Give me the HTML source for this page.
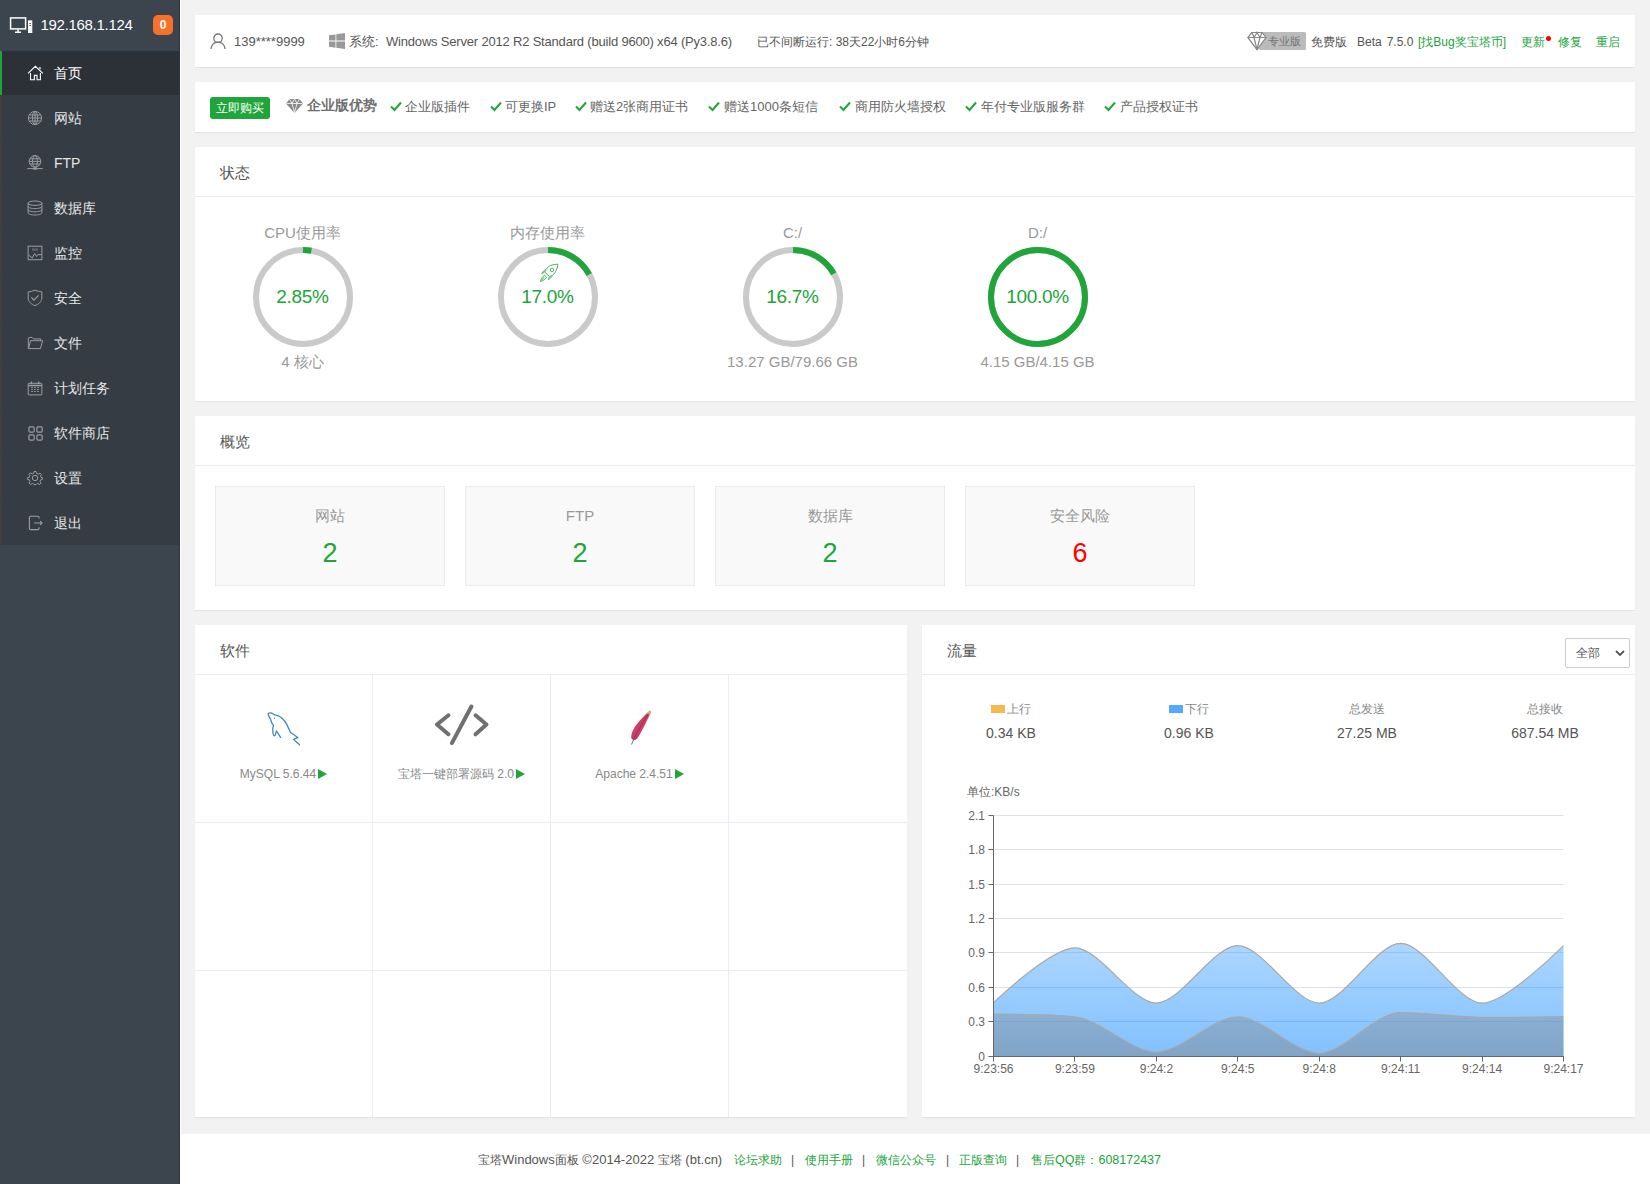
<!DOCTYPE html>
<html><head><meta charset="utf-8">
<style>
*{margin:0;padding:0;box-sizing:border-box}
html,body{width:1650px;height:1184px;overflow:hidden}
body{background:#f2f2f2;font-family:"Liberation Sans",sans-serif;color:#666;position:relative}
.a{position:absolute;white-space:nowrap}
#side{position:absolute;left:0;top:0;width:180px;height:1184px;background:#3c444d}
#side .ln{position:absolute;left:179px;top:0;width:1px;height:1184px;background:#30363e}
#side .wl{position:absolute;left:180px;top:0;width:1px;height:1184px;background:#fff}
#menu{position:absolute;left:0;top:51px;width:179px;height:494px;background:#353c44}
.mi{position:absolute;left:0;width:179px;height:44px;border-left:2px solid #3f3f3f}
.mi.cur{background:#2c3138;border-left-color:#20a53a}
.mi span{position:absolute;left:52px;top:0;line-height:44px;font-size:14px;color:#e6e6e6}
.mi.cur span{color:#fff}
.mi svg{position:absolute}
.pn{position:absolute;background:#fff;box-shadow:0 1px 1px rgba(0,0,0,.06)}
.ph{position:absolute;left:0;top:0;right:0;height:50px;border-bottom:1px solid #ececec}
.ph span{position:absolute;left:25px;top:1px;line-height:50px;font-size:15px;color:#555}
.g{color:#20a53a}
</style></head><body>
<div id="side">
  <div class="ln"></div><div class="wl"></div>
  <svg class="a" style="left:9px;top:16px" width="25" height="18" viewBox="0 0 25 18" fill="none" stroke="#fff" stroke-width="1.5"><rect x="1.6" y="1.9" width="15" height="11"/><path d="M6 16.3h6M9 13.5v2.5"/><rect x="19.5" y="4.9" width="3.3" height="11.6" fill="#fff" stroke-width="1"/><path d="M20.3 7.5h1.7M20.3 9.5h1.7" stroke="#3c444d" stroke-width=".8"/></svg>
  <div class="a" id="ip" style="left:40.5px;top:15px;font-size:15px;line-height:20px;color:#fff;letter-spacing:-0.3px">192.168.1.124</div>
  <div class="a" style="left:153px;top:15px;width:20px;height:20px;border-radius:5px;background:#f7712a;color:#fff;font-size:12px;font-weight:bold;line-height:20px;text-align:center">0</div>
  <div id="menu">
    <div class="mi cur" style="top:0px"><svg style="left:22px;top:11px" width="22" height="22" viewBox="0 0 22 22" fill="none" stroke="#9a9ea3" stroke-width="1"><path d="M4,11.3 L11.4,4.3 L18.8,11.3 M6.5,11 V17.7 H10.4 V13.4 H13 V17.7 H16.4 V11" stroke="#fff" stroke-width="1.1"/><circle cx="15.9" cy="6.2" r="1" fill="#fff"/></svg><span>首页</span></div>
    <div class="mi" style="top:45px"><svg style="left:22px;top:10px" width="22" height="22" viewBox="0 0 22 22" fill="none" stroke="#9a9ea3" stroke-width="1"><circle cx="11" cy="12" r="6.6"/><ellipse cx="11" cy="12" rx="2.6" ry="6.6"/><path d="M4.4,12H17.6M5.3,9H16.7M5.3,15H16.7M11,5.4V18.6"/></svg><span>网站</span></div>
    <div class="mi" style="top:90px"><svg style="left:22px;top:10px" width="22" height="22" viewBox="0 0 22 22" fill="none" stroke="#9a9ea3" stroke-width="1"><circle cx="11" cy="10.4" r="5.8"/><ellipse cx="11" cy="10.4" rx="2.4" ry="5.8"/><path d="M5.2,10.4H16.8M6,7.8H16M6,13H16M3.2,17.6H18.8"/><rect x="9.2" y="16.6" width="3.8" height="2" fill="#9a9ea3" stroke="none"/></svg><span>FTP</span></div>
    <div class="mi" style="top:135px"><svg style="left:22px;top:10px" width="22" height="22" viewBox="0 0 22 22" fill="none" stroke="#9a9ea3" stroke-width="1"><ellipse cx="11" cy="7.2" rx="6.9" ry="2.2"/><path d="M4.1,7.2V16.8C4.1,18 7.2,19 11,19S17.9,18 17.9,16.8V7.2M4.1,10.4C4.1,11.6 7.2,12.6 11,12.6S17.9,11.6 17.9,10.4M4.1,13.6C4.1,14.8 7.2,15.8 11,15.8S17.9,14.8 17.9,13.6"/></svg><span>数据库</span></div>
    <div class="mi" style="top:180px"><svg style="left:22px;top:10px" width="22" height="22" viewBox="0 0 22 22" fill="none" stroke="#9a9ea3" stroke-width="1"><rect x="4.1" y="5.2" width="13.8" height="13.5"/><path d="M4.8,14.3L8.4,17 10.5,12.5 12.5,15.5 13.8,13.6H17.5"/><rect x="8" y="7.4" width="5.8" height="2.4" fill="#5d636a" stroke="none"/></svg><span>监控</span></div>
    <div class="mi" style="top:225px"><svg style="left:22px;top:10px" width="22" height="22" viewBox="0 0 22 22" fill="none" stroke="#9a9ea3" stroke-width="1"><path d="M11,4.2C13,5 15.5,5.6 17.8,5.9V12C17.8,15.8 14.5,18.2 11,19.6 7.5,18.2 4.2,15.8 4.2,12V5.9C6.5,5.6 9,5 11,4.2Z"/><path d="M7.4,11.4L9.9,14.2 14.6,9.4" stroke-width="1.2"/></svg><span>安全</span></div>
    <div class="mi" style="top:270px"><svg style="left:22px;top:10px" width="22" height="22" viewBox="0 0 22 22" fill="none" stroke="#9a9ea3" stroke-width="1"><path d="M4.3,17.4V7.4C4.3,6.8 4.7,6.4 5.3,6.4H8.1L9.5,7.9H16.6V9.7M4.5,17.6L6.6,9.7H18.7L16.4,17.6Z"/></svg><span>文件</span></div>
    <div class="mi" style="top:315px"><svg style="left:22px;top:10px" width="22" height="22" viewBox="0 0 22 22" fill="none" stroke="#9a9ea3" stroke-width="1"><rect x="4.2" y="7.3" width="13.7" height="11.6" rx="0.8"/><path d="M4.2,9.5H17.9M7.4,5.4V8M14.6,5.4V8" stroke-width="1.3"/><path d="M7.1,11.3H8.9M10,11.3H11.8M13,11.3H14.8M7.1,13.4H8.9M10,13.4H11.8M13,13.4H14.8M7.1,15.5H8.9M10,15.5H11.8M13,15.5H14.8" stroke-width="0.9"/></svg><span>计划任务</span></div>
    <div class="mi" style="top:360px"><svg style="left:22px;top:10px" width="22" height="22" viewBox="0 0 22 22" fill="none" stroke="#9a9ea3" stroke-width="1"><rect x="4.9" y="5.9" width="5.3" height="5.3" rx="1.2" stroke-width="1.2"/><rect x="12.9" y="5.9" width="5.3" height="5.3" rx="1.2" stroke-width="1.2"/><rect x="4.9" y="13.9" width="5.3" height="5.3" rx="1.2" stroke-width="1.2"/><rect x="12.9" y="13.9" width="5.3" height="5.3" rx="1.2" stroke-width="1.2"/></svg><span>软件商店</span></div>
    <div class="mi" style="top:405px"><svg style="left:22px;top:10px" width="22" height="22" viewBox="0 0 22 22" fill="none" stroke="#9a9ea3" stroke-width="1"><circle cx="11" cy="12" r="2.7"/><path d="M10,5.5H12L12.6,7.5 14.2,8.2 16,7.1 17.4,8.5 16.4,10.3 17,11.4 18.4,11.6V13.4L16.6,13.9 16,15.3 17,17.1 15.6,18.5 13.8,17.5 12.5,18.1 12,18.6H10L9.5,17.9 8.2,17.5 6.4,18.5 5,17.1 6,15.3 5.4,13.9 3.6,13.4V11.6L5.3,11.2 5.9,9.9 5,8.3 6.4,6.9 8.2,7.9 9.5,7.4Z"/></svg><span>设置</span></div>
    <div class="mi" style="top:450px"><svg style="left:22px;top:10px" width="22" height="22" viewBox="0 0 22 22" fill="none" stroke="#9a9ea3" stroke-width="1"><path d="M15,7.4V6.3C15,5.7 14.6,5.3 14,5.3H6.4C5.8,5.3 5.4,5.7 5.4,6.3V17.6C5.4,18.2 5.8,18.6 6.4,18.6H14C14.6,18.6 15,18.2 15,17.6V16.2M10.2,12H17.8M16.2,10.2L18,12 16.2,13.8" stroke-width="1.1"/></svg><span>退出</span></div>
  </div>
</div>

<!-- top info panel -->
<div class="pn" style="left:195px;top:15px;width:1440px;height:52px"></div>
<svg class="a" style="left:210px;top:33px" width="16" height="16" viewBox="0 0 16 16" fill="none" stroke="#777" stroke-width="1.3"><circle cx="8" cy="5.2" r="4.2"/><path d="M1 16c0-4 3-6.8 7-6.8s7 2.8 7 6.8"/></svg>
<div class="a" id="t_user" style="left:234px;top:34px;font-size:13px;line-height:16px;color:#555">139****9999</div>
<svg class="a" style="left:329px;top:33px" width="16" height="16" viewBox="0 0 16 16" fill="#999"><path d="M0 2.3l6.5-.9v6.2H0zM7.3 1.3L16 0v7.6H7.3zM0 8.4h6.5v6.3L0 13.8zM7.3 8.4H16V16l-8.7-1.2z"/></svg>
<div class="a" id="t_sys" style="left:349px;top:34px;font-size:13px;line-height:16px;color:#555">系统:</div>
<div class="a" id="t_win" style="left:386px;top:34px;font-size:13px;letter-spacing:-0.19px;line-height:16px;color:#555">Windows Server 2012 R2 Standard (build 9600) x64 (Py3.8.6)</div>
<div class="a" id="t_up" style="left:757px;top:34px;font-size:12px;line-height:16px;color:#555">已不间断运行: 38天22小时6分钟</div>
<svg class="a" style="left:1247px;top:31px" width="20" height="20" viewBox="0 0 20 20" fill="#fff" stroke="#888" stroke-width="1.2"><path d="M5 1.5h10l4 5-9 12-9-12z"/><path d="M1 6.5h18M5 1.5l2 5 3 12 3-12 2-5M7 6.5l3-5 3 5" fill="none"/></svg>
<div class="a" style="left:1259px;top:32px;width:47px;height:18px;background:#bbb;border-radius:1.5px"></div>
<svg class="a" style="left:1247px;top:31px" width="20" height="20" viewBox="0 0 20 20" fill="#fff" stroke="#888" stroke-width="1.2"><path d="M5 1.5h10l4 5-9 12-9-12z"/><path d="M1 6.5h18M5 1.5l2 5 3 12 3-12 2-5M7 6.5l3-5 3 5" fill="none"/></svg>
<div class="a" id="t_pro" style="left:1268px;top:33px;font-size:11px;line-height:16px;color:#747474">专业版</div>
<div class="a" id="t_free" style="left:1311px;top:34px;font-size:12px;line-height:16px;color:#555">免费版</div>
<div class="a" id="t_beta" style="left:1357px;top:34px;font-size:12px;line-height:16px;color:#555">Beta<span style="margin-left:5px">7.5.0</span></div>
<div class="a g" id="t_bug" style="left:1418px;top:34px;font-size:12px;line-height:16px">[找Bug奖宝塔币]</div>
<div class="a g" id="t_upd" style="left:1521px;top:34px;font-size:12px;line-height:16px">更新</div>
<div class="a" style="left:1546px;top:36px;width:5px;height:5px;border-radius:50%;background:#f00"></div>
<div class="a g" id="t_fix" style="left:1558px;top:34px;font-size:12px;line-height:16px">修复</div>
<div class="a g" id="t_rst" style="left:1596px;top:34px;font-size:12px;line-height:16px">重启</div>
<!-- promo panel -->
<div class="pn" style="left:195px;top:82px;width:1440px;height:50px"></div>
<div class="a" style="left:210px;top:97px;width:60px;height:22px;background:#20a53a;border-radius:3px;color:#fff;font-size:12px;line-height:22px;text-align:center">立即购买</div>
<svg class="a" style="left:286px;top:99px" width="17" height="14" viewBox="0 0 17 14" fill="#888"><path d="M3.5 0h10L17 4.5 8.5 14 0 4.5z"/><path d="M0.5 4.5h16M3.5 0l2.5 4.5 2.5 9 2.5-9 2.5-4.5M6 4.5l2.5-4.5 2.5 4.5" fill="none" stroke="#fff" stroke-width=".8"/></svg>
<div class="a" id="p_adv" style="left:307px;top:98px;font-size:13.5px;line-height:16px;color:#6f6f6f;font-weight:bold">企业版优势</div>
<svg class="a" style="left:390px;top:101px" width="12" height="11" viewBox="0 0 12 11" fill="none" stroke="#20a53a" stroke-width="2"><path d="M1 5.5l3.5 3.5L11 1.5"/></svg>
<div class="a" id="p_i0" style="left:405px;top:99px;font-size:13px;line-height:16px;color:#666">企业版插件</div>
<svg class="a" style="left:490px;top:101px" width="12" height="11" viewBox="0 0 12 11" fill="none" stroke="#20a53a" stroke-width="2"><path d="M1 5.5l3.5 3.5L11 1.5"/></svg>
<div class="a" id="p_i1" style="left:505px;top:99px;font-size:13px;line-height:16px;color:#666">可更换IP</div>
<svg class="a" style="left:575px;top:101px" width="12" height="11" viewBox="0 0 12 11" fill="none" stroke="#20a53a" stroke-width="2"><path d="M1 5.5l3.5 3.5L11 1.5"/></svg>
<div class="a" id="p_i2" style="left:590px;top:99px;font-size:13px;line-height:16px;color:#666">赠送2张商用证书</div>
<svg class="a" style="left:708px;top:101px" width="12" height="11" viewBox="0 0 12 11" fill="none" stroke="#20a53a" stroke-width="2"><path d="M1 5.5l3.5 3.5L11 1.5"/></svg>
<div class="a" id="p_i3" style="left:724px;top:99px;font-size:13px;line-height:16px;color:#666">赠送1000条短信</div>
<svg class="a" style="left:839px;top:101px" width="12" height="11" viewBox="0 0 12 11" fill="none" stroke="#20a53a" stroke-width="2"><path d="M1 5.5l3.5 3.5L11 1.5"/></svg>
<div class="a" id="p_i4" style="left:855px;top:99px;font-size:13px;line-height:16px;color:#666">商用防火墙授权</div>
<svg class="a" style="left:965px;top:101px" width="12" height="11" viewBox="0 0 12 11" fill="none" stroke="#20a53a" stroke-width="2"><path d="M1 5.5l3.5 3.5L11 1.5"/></svg>
<div class="a" id="p_i5" style="left:981px;top:99px;font-size:13px;line-height:16px;color:#666">年付专业版服务群</div>
<svg class="a" style="left:1104px;top:101px" width="12" height="11" viewBox="0 0 12 11" fill="none" stroke="#20a53a" stroke-width="2"><path d="M1 5.5l3.5 3.5L11 1.5"/></svg>
<div class="a" id="p_i6" style="left:1120px;top:99px;font-size:13px;line-height:16px;color:#666">产品授权证书</div>
<!-- status panel -->
<div class="pn" style="left:195px;top:147px;width:1440px;height:254px"><div class="ph"><span>状态</span></div></div>
<div class="a" id="g_t0" style="left:202.5px;width:200px;text-align:center;top:224px;font-size:15px;line-height:18px;color:#999">CPU使用率</div>
<svg class="a" style="left:252.5px;top:247px" width="100" height="100" viewBox="0 0 100 100"><circle cx="50" cy="50" r="47" fill="none" stroke="#cacaca" stroke-width="6"/><circle cx="50" cy="50" r="47" fill="none" stroke="#20a53a" stroke-width="6" stroke-dasharray="8.42 295.31" transform="rotate(-90 50 50)"/></svg>
<div class="a g" id="g_p0" style="left:202.5px;width:200px;text-align:center;top:285px;font-size:19px;line-height:24px;letter-spacing:-0.3px">2.85%</div>
<div class="a" id="g_s0" style="left:202.5px;width:200px;text-align:center;top:353px;font-size:15px;line-height:18px;color:#999">4 核心</div>
<div class="a" id="g_t1" style="left:447.5px;width:200px;text-align:center;top:224px;font-size:15px;line-height:18px;color:#999">内存使用率</div>
<svg class="a" style="left:497.5px;top:247px" width="100" height="100" viewBox="0 0 100 100"><circle cx="50" cy="50" r="47" fill="none" stroke="#cacaca" stroke-width="6"/><circle cx="50" cy="50" r="47" fill="none" stroke="#20a53a" stroke-width="6" stroke-dasharray="50.20 295.31" transform="rotate(-90 50 50)"/></svg>
<div class="a g" id="g_p1" style="left:447.5px;width:200px;text-align:center;top:285px;font-size:19px;line-height:24px;letter-spacing:-0.3px">17.0%</div>
<div class="a" id="g_t2" style="left:692.5px;width:200px;text-align:center;top:224px;font-size:15px;line-height:18px;color:#999">C:/</div>
<svg class="a" style="left:742.5px;top:247px" width="100" height="100" viewBox="0 0 100 100"><circle cx="50" cy="50" r="47" fill="none" stroke="#cacaca" stroke-width="6"/><circle cx="50" cy="50" r="47" fill="none" stroke="#20a53a" stroke-width="6" stroke-dasharray="49.32 295.31" transform="rotate(-90 50 50)"/></svg>
<div class="a g" id="g_p2" style="left:692.5px;width:200px;text-align:center;top:285px;font-size:19px;line-height:24px;letter-spacing:-0.3px">16.7%</div>
<div class="a" id="g_s2" style="left:692.5px;width:200px;text-align:center;top:353px;font-size:15px;line-height:18px;color:#999">13.27 GB/79.66 GB</div>
<div class="a" id="g_t3" style="left:937.5px;width:200px;text-align:center;top:224px;font-size:15px;line-height:18px;color:#999">D:/</div>
<svg class="a" style="left:987.5px;top:247px" width="100" height="100" viewBox="0 0 100 100"><circle cx="50" cy="50" r="47" fill="none" stroke="#cacaca" stroke-width="6"/><circle cx="50" cy="50" r="47" fill="none" stroke="#20a53a" stroke-width="6" stroke-dasharray="295.31 295.31" transform="rotate(-90 50 50)"/></svg>
<div class="a g" id="g_p3" style="left:937.5px;width:200px;text-align:center;top:285px;font-size:19px;line-height:24px;letter-spacing:-0.3px">100.0%</div>
<div class="a" id="g_s3" style="left:937.5px;width:200px;text-align:center;top:353px;font-size:15px;line-height:18px;color:#999">4.15 GB/4.15 GB</div>
<svg class="a" style="left:532px;top:258px" width="32" height="32" viewBox="0 0 32 32" fill="none" stroke="#3aae50" stroke-width=".9" stroke-linejoin="round"><path d="M25.9,6.2 C22,6.5 19,7 17.3,8.1 C15.8,9 14.8,10.3 14.1,11.4 L12.6,14 L17.6,18.6 L20.5,17.3 C22.3,15.8 23.5,14 24.3,12.2 C25.2,10.2 25.8,8 25.9,6.2Z"/><path d="M14.1,11.4 C12,12.2 10.5,13.8 9.7,15.7 L12.6,14 M20.5,17.3 C19.5,19.3 18,20.8 16.2,21.6 L17.6,18.6"/><circle cx="20" cy="11.9" r="1.7"/><path d="M12.6,17.2 C10.5,18.5 9,21 8.4,23.5 C11,22.8 13.2,21.3 14.6,19.4Z M12.3,19 L9.6,22.3"/></svg>
<!-- overview panel -->
<div class="pn" style="left:195px;top:416px;width:1440px;height:194px"><div class="ph"><span>概览</span></div></div>
<div class="a" style="left:215px;top:486px;width:230px;height:100px;background:#f9f9f9;border:1px solid #ebebeb"></div>
<div class="a" id="o_t0" style="left:215px;width:230px;text-align:center;top:507px;font-size:15px;line-height:18px;color:#999">网站</div>
<div class="a" id="o_n0" style="left:215px;width:230px;text-align:center;top:538px;font-size:27px;line-height:30px;color:#20a53a">2</div>
<div class="a" style="left:465px;top:486px;width:230px;height:100px;background:#f9f9f9;border:1px solid #ebebeb"></div>
<div class="a" id="o_t1" style="left:465px;width:230px;text-align:center;top:507px;font-size:15px;line-height:18px;color:#999">FTP</div>
<div class="a" id="o_n1" style="left:465px;width:230px;text-align:center;top:538px;font-size:27px;line-height:30px;color:#20a53a">2</div>
<div class="a" style="left:715px;top:486px;width:230px;height:100px;background:#f9f9f9;border:1px solid #ebebeb"></div>
<div class="a" id="o_t2" style="left:715px;width:230px;text-align:center;top:507px;font-size:15px;line-height:18px;color:#999">数据库</div>
<div class="a" id="o_n2" style="left:715px;width:230px;text-align:center;top:538px;font-size:27px;line-height:30px;color:#20a53a">2</div>
<div class="a" style="left:965px;top:486px;width:230px;height:100px;background:#f9f9f9;border:1px solid #ebebeb"></div>
<div class="a" id="o_t3" style="left:965px;width:230px;text-align:center;top:507px;font-size:15px;line-height:18px;color:#999">安全风险</div>
<div class="a" id="o_n3" style="left:965px;width:230px;text-align:center;top:538px;font-size:27px;line-height:30px;color:#f00">6</div>
<!-- software panel -->
<div class="pn" style="left:195px;top:625px;width:712px;height:492px"><div class="ph"><span>软件</span></div></div>
<div class="a" style="left:372px;top:675px;width:1px;height:442px;background:#ebebf5"></div>
<div class="a" style="left:550px;top:675px;width:1px;height:442px;background:#ebebf5"></div>
<div class="a" style="left:728px;top:675px;width:1px;height:442px;background:#ebebf5"></div>
<div class="a" style="left:195px;top:822px;width:712px;height:1px;background:#ebebf5"></div>
<div class="a" style="left:195px;top:970px;width:712px;height:1px;background:#ebebf5"></div>
<svg class="a" style="left:262px;top:708px" width="44" height="44" viewBox="0 0 44 44" fill="none" stroke="#3f86bd" stroke-width="1.3" stroke-linejoin="round" stroke-linecap="round"><path d="M18.6,29.4 L14.5,23 C13.6,25 13.4,27.9 12.6,27.9 C11,27.9 10.6,24 10.8,20.4 C10.9,18.5 11.8,17.6 11.5,17.3 C10.5,16.5 9.9,15.5 9.5,14 C8.9,11.5 7.4,9.3 6.6,7.5 C5.7,5.5 6.5,4.8 8.4,4.8 C10,4.8 11.2,6.5 12.9,6.9 C17,7.5 20.5,10 23,13.5 C25.5,17 26.8,21 28.3,24.3 C30.5,25.8 33.5,27.5 35.8,29.7 L31.6,31.3 C33.5,33.5 35.5,35 37.5,36.8"/><circle cx="12.5" cy="10.2" r=".6" fill="#3f86bd" stroke="none"/></svg>
<div class="a" id="s_t0" style="left:195px;width:177px;text-align:center;top:766px;font-size:12px;line-height:16px;color:#888">MySQL 5.6.44<span style="display:inline-block;width:0;height:0;border-left:9px solid #20a53a;border-top:5px solid transparent;border-bottom:5px solid transparent;vertical-align:-1px;margin-left:2px"></span></div>
<svg class="a" style="left:433px;top:703px" width="56" height="44" viewBox="0 0 56 44" fill="none" stroke="#707070" stroke-width="4" stroke-linecap="round" stroke-linejoin="round">
<path d="M15.4 12.3L4 21.5l11.4 9.8M42.6 12.3L53.4 21.5 42.6 31.3M38.4 3.5L18.9 40.1"/>
</svg>
<div class="a" id="s_t1" style="left:373px;width:177px;text-align:center;top:766px;font-size:12px;line-height:16px;color:#888">宝塔一键部署源码 2.0<span style="display:inline-block;width:0;height:0;border-left:9px solid #20a53a;border-top:5px solid transparent;border-bottom:5px solid transparent;vertical-align:-1px;margin-left:2px"></span></div>
<svg class="a" style="left:620px;top:705px" width="44" height="44" viewBox="0 0 44 44"><path d="M29.4,5.9 C26,8.6 20.8,14.1 15.6,20.8 C13,24.5 11.2,29 11.2,32 C11.2,33.5 12,34.5 13.5,35 C15,35.3 16.5,34.5 17.5,33.2 C20.5,28.5 23,23.5 25.3,19 C27,15.5 29,11.5 30.5,8.3 C31,7 30.5,5.5 29.4,5.9Z" fill="#cd3d66"/><path d="M29.4,5.9 C28.5,6.5 27.5,7.4 26.8,8.3 C28,9.3 29.3,9.8 30,9.9 C30.6,8.5 31.2,6.8 30.7,6 C30.4,5.6 29.9,5.6 29.4,5.9Z" fill="#c9b27d"/><path d="M28.5,8.8 C23,17 17,27 13.2,35" stroke="#6b3440" stroke-width=".7" fill="none"/><path d="M13.6,34.5 L11.5,39.5" stroke="#6c7478" stroke-width="1" fill="none"/></svg>
<div class="a" id="s_t2" style="left:551px;width:177px;text-align:center;top:766px;font-size:12px;line-height:16px;color:#888">Apache 2.4.51<span style="display:inline-block;width:0;height:0;border-left:9px solid #20a53a;border-top:5px solid transparent;border-bottom:5px solid transparent;vertical-align:-1px;margin-left:2px"></span></div>
<!-- traffic panel -->
<div class="pn" style="left:922px;top:625px;width:713px;height:492px"><div class="ph"><span>流量</span></div></div>
<div class="a" style="left:1565px;top:638px;width:65px;height:30px;border:1px solid #ccc;border-radius:2px;background:#fff"></div>
<div class="a" id="sel" style="left:1576px;top:645px;font-size:12px;line-height:16px;color:#555">全部</div>
<svg class="a" style="left:1615px;top:650px" width="10" height="7" viewBox="0 0 10 7" fill="none" stroke="#555" stroke-width="1.8"><path d="M1 1l4 4 4-4"/></svg>
<div class="a" id="tr_t0" style="left:931px;width:160px;text-align:center;top:701px;font-size:12px;line-height:16px;color:#888"><span style="display:inline-block;width:14px;height:8px;background:#f7b851;margin-right:2px;vertical-align:0"></span>上行</div>
<div class="a" id="tr_v0" style="left:931px;width:160px;text-align:center;top:724px;font-size:14px;line-height:18px;color:#555">0.34 KB</div>
<div class="a" id="tr_t1" style="left:1109px;width:160px;text-align:center;top:701px;font-size:12px;line-height:16px;color:#888"><span style="display:inline-block;width:14px;height:8px;background:#52a9ff;margin-right:2px;vertical-align:0"></span>下行</div>
<div class="a" id="tr_v1" style="left:1109px;width:160px;text-align:center;top:724px;font-size:14px;line-height:18px;color:#555">0.96 KB</div>
<div class="a" id="tr_t2" style="left:1287px;width:160px;text-align:center;top:701px;font-size:12px;line-height:16px;color:#888">总发送</div>
<div class="a" id="tr_v2" style="left:1287px;width:160px;text-align:center;top:724px;font-size:14px;line-height:18px;color:#555">27.25 MB</div>
<div class="a" id="tr_t3" style="left:1465px;width:160px;text-align:center;top:701px;font-size:12px;line-height:16px;color:#888">总接收</div>
<div class="a" id="tr_v3" style="left:1465px;width:160px;text-align:center;top:724px;font-size:14px;line-height:18px;color:#555">687.54 MB</div>
<div class="a" id="unit" style="left:967px;top:784px;font-size:12px;line-height:16px;color:#666">单位:KB/s</div>
<!--CHART--><svg class="a" style="left:940px;top:770px" width="680" height="320" viewBox="940 770 680 320" font-family="Liberation Sans, sans-serif">
<defs><linearGradient id="gd" x1="0" y1="0" x2="0" y2="1"><stop offset="0" stop-color="#1e90ff" stop-opacity=".37"/><stop offset="1" stop-color="#1e90ff" stop-opacity=".56"/></linearGradient><linearGradient id="gu" x1="0" y1="0" x2="0" y2="1"><stop offset="0" stop-color="#808080" stop-opacity=".33"/><stop offset="1" stop-color="#808080" stop-opacity=".45"/></linearGradient></defs>
<path d="M993.5,1021.5H1563.51" stroke="#e0e0e0" stroke-width="1"/>
<path d="M993.5,987.5H1563.51" stroke="#e0e0e0" stroke-width="1"/>
<path d="M993.5,952.5H1563.51" stroke="#e0e0e0" stroke-width="1"/>
<path d="M993.5,918.5H1563.51" stroke="#e0e0e0" stroke-width="1"/>
<path d="M993.5,884.5H1563.51" stroke="#e0e0e0" stroke-width="1"/>
<path d="M993.5,849.5H1563.51" stroke="#e0e0e0" stroke-width="1"/>
<path d="M993.5,815.5H1563.51" stroke="#e0e0e0" stroke-width="1"/>
<path d="M993.50,1002.60 C993.50,1002.60 1050.54,947.90 1074.93,947.90 C1099.39,947.90 1132.09,1003.10 1156.36,1003.10 C1180.95,1003.10 1213.36,945.60 1237.79,945.60 C1262.22,945.60 1294.95,1003.10 1319.22,1003.10 C1343.81,1003.10 1376.22,943.40 1400.65,943.40 C1425.08,943.40 1457.49,1003.10 1482.08,1003.10 C1506.35,1003.10 1563.51,945.60 1563.51,945.60 L1563.51,1056 L993.5,1056Z" fill="url(#gd)"/>
<path d="M993.50,1014.20 C993.50,1014.20 1051.55,1014.20 1074.93,1016.80 C1100.41,1019.63 1131.93,1052.20 1156.36,1052.20 C1180.79,1052.20 1213.42,1016.80 1237.79,1016.80 C1262.28,1016.80 1295.03,1053.30 1319.22,1053.30 C1343.89,1053.30 1374.88,1012.60 1400.65,1012.60 C1423.74,1012.60 1457.63,1017.40 1482.08,1017.40 C1506.49,1017.40 1563.51,1016.50 1563.51,1016.50 L1563.51,1056 L993.5,1056Z" fill="url(#gu)"/>
<path d="M993.50,1002.60 C993.50,1002.60 1050.54,947.90 1074.93,947.90 C1099.39,947.90 1132.09,1003.10 1156.36,1003.10 C1180.95,1003.10 1213.36,945.60 1237.79,945.60 C1262.22,945.60 1294.95,1003.10 1319.22,1003.10 C1343.81,1003.10 1376.22,943.40 1400.65,943.40 C1425.08,943.40 1457.49,1003.10 1482.08,1003.10 C1506.35,1003.10 1563.51,945.60 1563.51,945.60" fill="none" stroke="#a8a8a8" stroke-width="1.2"/>
<path d="M993.50,1014.20 C993.50,1014.20 1051.55,1014.20 1074.93,1016.80 C1100.41,1019.63 1131.93,1052.20 1156.36,1052.20 C1180.79,1052.20 1213.42,1016.80 1237.79,1016.80 C1262.28,1016.80 1295.03,1053.30 1319.22,1053.30 C1343.89,1053.30 1374.88,1012.60 1400.65,1012.60 C1423.74,1012.60 1457.63,1017.40 1482.08,1017.40 C1506.49,1017.40 1563.51,1016.50 1563.51,1016.50" fill="none" stroke="#a8a8a8" stroke-width="1.2"/>
<path d="M993.5,815.5V1056.5M993.0,1056.5H1564.01" stroke="#666" stroke-width="1"/>
<path d="M988.5,1056.5H993.5" stroke="#666" stroke-width="1"/>
<text x="985" y="1060.7" text-anchor="end" font-size="12" fill="#666">0</text>
<path d="M988.5,1021.5H993.5" stroke="#666" stroke-width="1"/>
<text x="985" y="1025.7" text-anchor="end" font-size="12" fill="#666">0.3</text>
<path d="M988.5,987.5H993.5" stroke="#666" stroke-width="1"/>
<text x="985" y="991.7" text-anchor="end" font-size="12" fill="#666">0.6</text>
<path d="M988.5,952.5H993.5" stroke="#666" stroke-width="1"/>
<text x="985" y="956.7" text-anchor="end" font-size="12" fill="#666">0.9</text>
<path d="M988.5,918.5H993.5" stroke="#666" stroke-width="1"/>
<text x="985" y="922.7" text-anchor="end" font-size="12" fill="#666">1.2</text>
<path d="M988.5,884.5H993.5" stroke="#666" stroke-width="1"/>
<text x="985" y="888.7" text-anchor="end" font-size="12" fill="#666">1.5</text>
<path d="M988.5,849.5H993.5" stroke="#666" stroke-width="1"/>
<text x="985" y="853.7" text-anchor="end" font-size="12" fill="#666">1.8</text>
<path d="M988.5,815.5H993.5" stroke="#666" stroke-width="1"/>
<text x="985" y="819.7" text-anchor="end" font-size="12" fill="#666">2.1</text>
<path d="M993.5,1056V1061.5" stroke="#666" stroke-width="1"/>
<text x="993.5" y="1072.5" text-anchor="middle" font-size="12" fill="#666">9:23:56</text>
<path d="M1074.5,1056V1061.5" stroke="#666" stroke-width="1"/>
<text x="1074.9" y="1072.5" text-anchor="middle" font-size="12" fill="#666">9:23:59</text>
<path d="M1156.5,1056V1061.5" stroke="#666" stroke-width="1"/>
<text x="1156.4" y="1072.5" text-anchor="middle" font-size="12" fill="#666">9:24:2</text>
<path d="M1237.5,1056V1061.5" stroke="#666" stroke-width="1"/>
<text x="1237.8" y="1072.5" text-anchor="middle" font-size="12" fill="#666">9:24:5</text>
<path d="M1319.5,1056V1061.5" stroke="#666" stroke-width="1"/>
<text x="1319.2" y="1072.5" text-anchor="middle" font-size="12" fill="#666">9:24:8</text>
<path d="M1400.5,1056V1061.5" stroke="#666" stroke-width="1"/>
<text x="1400.7" y="1072.5" text-anchor="middle" font-size="12" fill="#666">9:24:11</text>
<path d="M1482.5,1056V1061.5" stroke="#666" stroke-width="1"/>
<text x="1482.1" y="1072.5" text-anchor="middle" font-size="12" fill="#666">9:24:14</text>
<path d="M1563.5,1056V1061.5" stroke="#666" stroke-width="1"/>
<text x="1563.5" y="1072.5" text-anchor="middle" font-size="12" fill="#666">9:24:17</text>
</svg>
<!--/CHART-->
<!-- footer -->
<div class="a" style="left:181px;top:1134px;width:1469px;height:50px;background:#fff"></div>
<div class="a" id="f0" style="left:478px;top:1152px;font-size:12px;line-height:16px;color:#555;">宝塔<span style="font-size:13px">Windows</span>面板<span style="font-size:13px"> ©2014-2022 </span>宝塔<span style="font-size:13px"> (bt.cn)</span></div>
<div class="a g" id="f1" style="left:734px;top:1152px;font-size:12px;line-height:16px;">论坛求助</div>
<div class="a" id="f2" style="left:791px;top:1152px;font-size:12px;line-height:16px;color:#555;">|</div>
<div class="a g" id="f3" style="left:805px;top:1152px;font-size:12px;line-height:16px;">使用手册</div>
<div class="a" id="f4" style="left:862px;top:1152px;font-size:12px;line-height:16px;color:#555;">|</div>
<div class="a g" id="f5" style="left:876px;top:1152px;font-size:12px;line-height:16px;">微信公众号</div>
<div class="a" id="f6" style="left:946px;top:1152px;font-size:12px;line-height:16px;color:#555;">|</div>
<div class="a g" id="f7" style="left:959px;top:1152px;font-size:12px;line-height:16px;">正版查询</div>
<div class="a" id="f8" style="left:1016px;top:1152px;font-size:12px;line-height:16px;color:#555;">|</div>
<div class="a g" id="f9" style="left:1031px;top:1152px;font-size:12px;line-height:16px;">售后<span style="font-size:12.5px">QQ</span>群：<span style="font-size:12.5px">608172437</span></div>

</body></html>
